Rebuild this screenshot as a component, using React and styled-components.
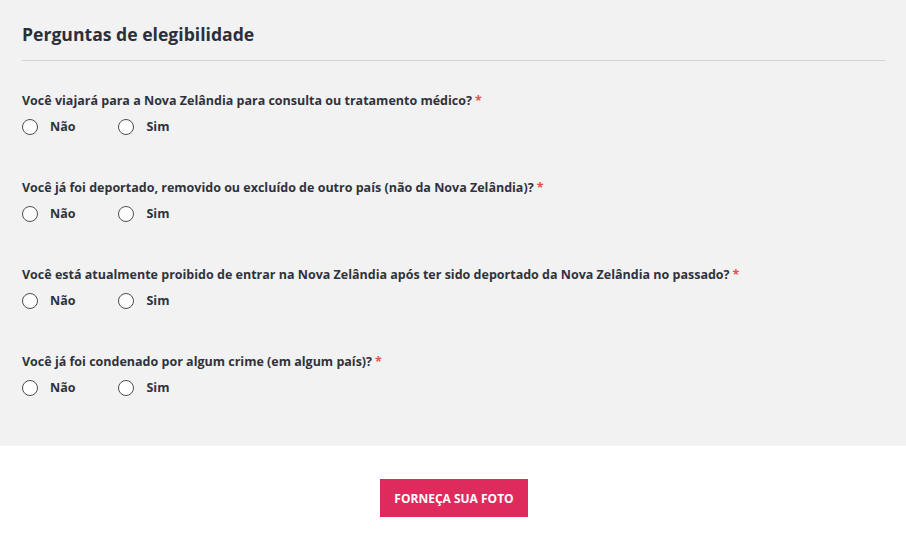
import React from "react";
import styled, { createGlobalStyle } from "styled-components";

const GlobalStyle = createGlobalStyle`
  body {
    margin: 0;
    background: #fff;
    font-family: "Open Sans", "DejaVu Sans", sans-serif;
  }
`;

const Panel = styled.section`
  background: #f2f2f2;
  padding: 22px 21px 50px 22px;
`;

const Title = styled.h2`
  margin: 0;
  font-size: 17.6px;
  font-weight: 700;
  color: #2b2f3a;
  line-height: 24px;
  padding-bottom: 14px;
  border-bottom: 1px solid #d6d6d6;
`;

const Questions = styled.div`
  display: flex;
  flex-direction: column;
  gap: 44px;
  padding-top: 31px;
`;

const Question = styled.div`
  display: flex;
  flex-direction: column;
  gap: 8px;
`;

const Label = styled.div`
  font-size: 12.5px;
  font-weight: 700;
  color: #2f323c;
  line-height: 18px;
`;

const Required = styled.span`
  color: #e0534a;
  margin-left: 3px;
`;

const Options = styled.div`
  display: flex;
  gap: 43px;
`;

const Option = styled.label`
  display: flex;
  align-items: center;
  gap: 12px;
  font-size: 12.5px;
  font-weight: 700;
  color: #2f323c;
  cursor: pointer;
`;

const Circle = styled.span`
  width: 14px;
  height: 14px;
  border-radius: 50%;
  border: 1.2px solid #4a4d55;
  background: #fff;
`;

const Footer = styled.div`
  display: flex;
  justify-content: center;
  padding-top: 33px;
`;

const Button = styled.button`
  background: #df2a5e;
  color: #fff;
  border: 0;
  width: 148px;
  height: 38px;
  margin-left: 2px;
  font-family: inherit;
  font-size: 12px;
  font-weight: 700;
  cursor: pointer;
`;

const questions = [
  "Você viajará para a Nova Zelândia para consulta ou tratamento médico?",
  "Você já foi deportado, removido ou excluído de outro país (não da Nova Zelândia)?",
  "Você está atualmente proibido de entrar na Nova Zelândia após ter sido deportado da Nova Zelândia no passado?",
  "Você já foi condenado por algum crime (em algum país)?",
];

export default function App() {
  return (
    <>
      <GlobalStyle />
      <Panel>
        <Title>Perguntas de elegibilidade</Title>
        <Questions>
          {questions.map((q) => (
            <Question key={q}>
              <Label>
                {q}
                <Required>*</Required>
              </Label>
              <Options>
                <Option>
                  <Circle />
                  Não
                </Option>
                <Option>
                  <Circle />
                  Sim
                </Option>
              </Options>
            </Question>
          ))}
        </Questions>
      </Panel>
      <Footer>
        <Button>FORNEÇA SUA FOTO</Button>
      </Footer>
    </>
  );
}
